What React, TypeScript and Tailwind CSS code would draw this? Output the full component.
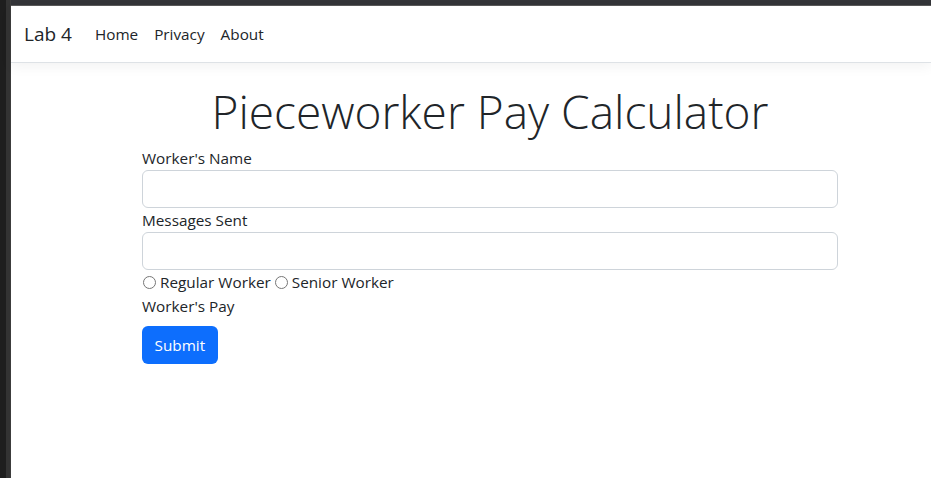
import React from 'react'

const font = { fontFamily: '"Open Sans", "Noto Sans", sans-serif' }

function NavBar() {
	return (
		<nav className="h-[57px] flex items-center px-[12px] bg-white border-b border-[#dee2e6] shadow-[0_4px_12px_rgba(0,0,0,0.05)] relative">
			<a className="text-[19px] text-[#212529] mr-[15px] ml-[1px]">Lab 4</a>
			<ul className="flex text-[15.3px] text-[#212529]">
				<li className="px-[8px]">Home</li>
				<li className="px-[8px]">Privacy</li>
				<li className="px-[8px]">About</li>
			</ul>
		</nav>
	)
}

export default function App() {
	return (
		<div className="h-[478px] w-[931px] flex overflow-hidden" style={font}>
			{/* window frame */}
			<div className="w-[6px] bg-[#1e1e1e]" />
			<div className="w-[4px] bg-[#333333]" />
			<div className="w-[1px] bg-[#3c3c3c]" />

			<div className="flex-1 flex flex-col">
				<div className="h-[5px] bg-[#333438]" />
				<div className="h-[1px] bg-[#5a5a5a]" />

				<div className="flex-1 bg-white">
					<NavBar />

					<main className="w-[696px] ml-[131px] pt-[17px] text-[15.3px] leading-[24px] text-[#212529]">
						<h1 className="text-center text-[46px] leading-[62px] font-light mb-[4px]">
							Pieceworker Pay Calculator
						</h1>

						<form className="flex flex-col">
							<label>Worker's Name</label>
							<input
								type="text"
								className="h-[38px] w-full border border-[#ced4da] rounded-[6px] px-[12px]"
							/>
							<label>Messages Sent</label>
							<input
								type="text"
								className="h-[38px] w-full border border-[#ced4da] rounded-[6px] px-[12px]"
							/>
							<div className="flex items-center h-[24px]">
								<input type="radio" name="type" className="w-[13px] h-[13px] mr-[4px] ml-[1px]" />
								<span className="mr-[4px]">Regular Worker</span>
								<input type="radio" name="type" className="w-[13px] h-[13px] mr-[4px]" />
								<span>Senior Worker</span>
							</div>
							<div>Worker's Pay</div>
							<div className="mt-[8px]">
								<button
									type="button"
									className="h-[38px] px-[12.5px] rounded-[6px] bg-[#0d6efd] text-white"
								>
									Submit
								</button>
							</div>
						</form>
					</main>
				</div>
			</div>
		</div>
	)
}
